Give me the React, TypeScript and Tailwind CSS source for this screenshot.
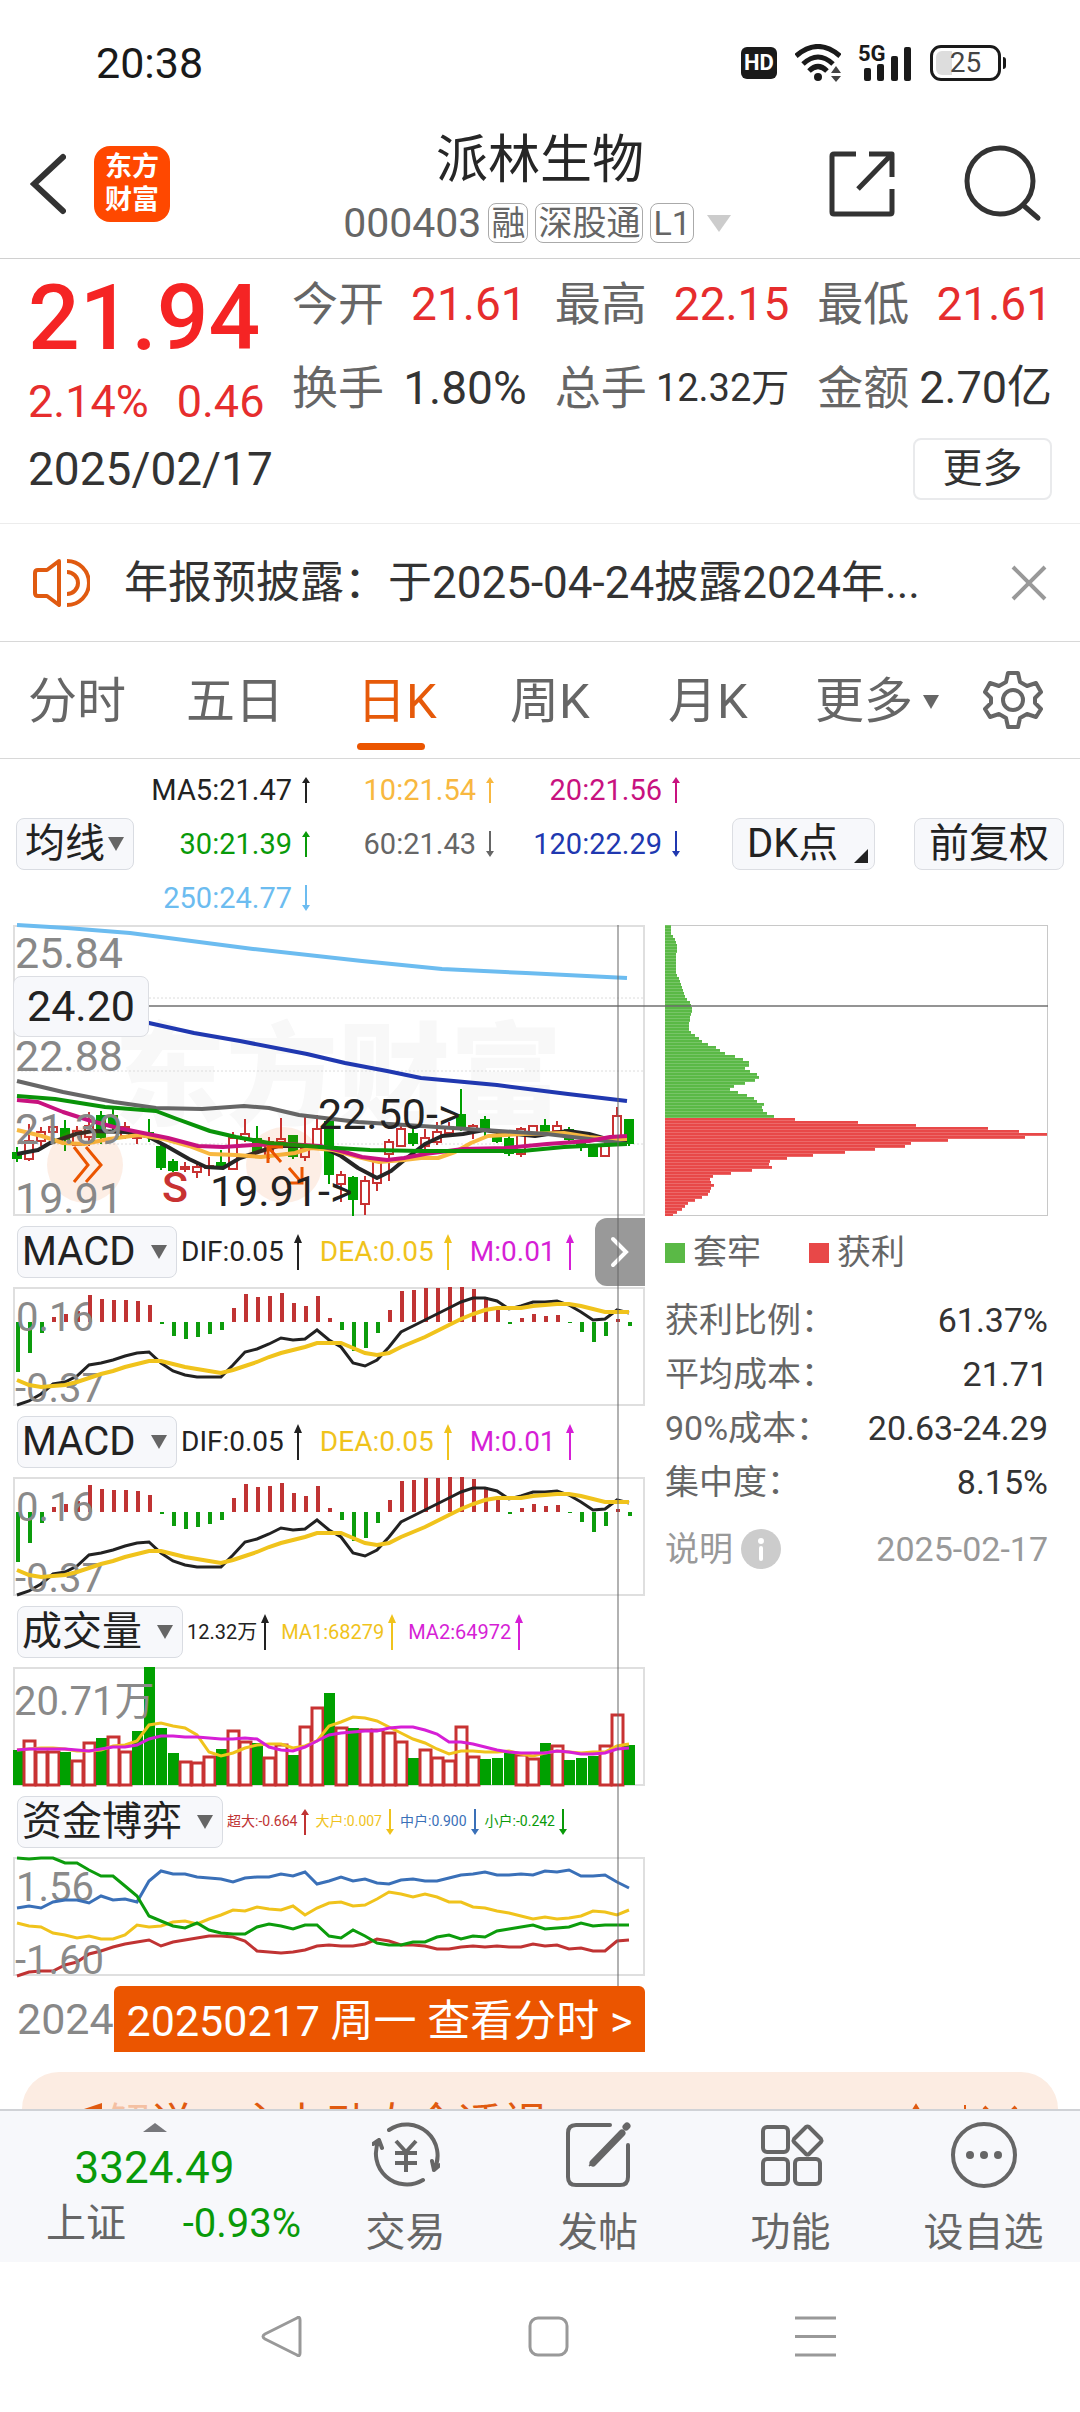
import type { ReactNode } from "react";

// ---- chart data -----------------------------------------------------------

// [up, high, body top, body bottom, low]
const candles = [
  [0, 222, 228, 233, 237], [1, 199, 216, 234, 236], [1, 202, 207, 216, 221], [1, 200, 202, 207, 217],
  [0, 195, 204, 214, 226], [1, 201, 206, 220, 221], [1, 187, 201, 212, 221], [0, 186, 191, 212, 219],
  [0, 184, 191, 201, 207], [1, 197, 202, 211, 214], [1, 206, 211, 213, 219], [0, 194, 208, 212, 217],
  [0, 219, 222, 242, 245], [0, 234, 237, 245, 247], [1, 237, 242, 244, 247], [1, 236, 242, 247, 253],
  [1, 232, 241, 243, 251], [0, 225, 238, 240, 242], [1, 207, 213, 244, 245], [1, 194, 209, 214, 217],
  [0, 201, 214, 226, 229], [1, 212, 217, 231, 234], [1, 193, 214, 217, 222], [0, 210, 211, 231, 234],
  [1, 191, 224, 232, 236], [1, 190, 204, 221, 222], [0, 196, 197, 249, 259], [1, 246, 250, 259, 277],
  [0, 251, 253, 274, 291], [1, 251, 256, 279, 290], [1, 232, 237, 258, 266], [1, 214, 217, 229, 256],
  [1, 201, 204, 221, 222], [0, 201, 209, 218, 221], [1, 204, 213, 221, 225], [1, 197, 207, 217, 220],
  [1, 197, 202, 208, 212], [0, 164, 190, 202, 206], [1, 199, 201, 204, 214], [0, 191, 195, 205, 211],
  [0, 207, 211, 216, 218], [0, 211, 214, 228, 231], [1, 202, 204, 229, 232], [1, 200, 201, 211, 212],
  [0, 194, 201, 206, 208], [1, 196, 201, 206, 208], [0, 202, 205, 214, 216], [0, 214, 216, 221, 226],
  [0, 219, 221, 231, 231], [1, 217, 221, 231, 231], [1, 182, 191, 211, 214], [0, 194, 195, 218, 221],
];

const maLines = [
  { color: "#6cbcf0", d: "M4 0 L54 3 L117 8 L240 24 L349 36 L429 44 L513 48 L614 53" },
  { color: "#2038b0", d: "M60 82 L136 98 L181 108 L227 116 L294 129 L332 138 L374 146 L408 153 L484 160 L555 169 L614 176" },
  { color: "#262626", d: "M4 229 L25 225 L37 218 L63 209 L80 206 L113 207 L134 211 L155 222 L176 234 L193 242 L210 243 L227 233 L248 226 L265 221 L290 221 L311 223 L328 231 L345 243 L364 253 L378 246 L395 232 L412 219 L429 211 L450 209 L471 205 L492 208 L522 211 L555 206 L576 209 L597 215 L614 215" },
  { color: "#f8b840", d: "M4 205 L29 211 L50 218 L71 219 L96 214 L126 210 L151 214 L176 221 L197 229 L223 230 L248 232 L282 228 L298 223 L320 225 L345 232 L366 237 L391 235 L408 233 L425 233 L442 227 L458 218 L475 211 L509 209 L551 208 L576 212 L597 214 L614 214" },
  { color: "#666666", d: "M4 156 L50 167 L101 177 L143 183 L189 184 L231 181 L256 183 L286 190 L345 197 L408 201 L471 205 L534 209 L585 215 L614 219" },
  { color: "#c8127f", d: "M4 175 L25 177 L50 187 L75 195 L101 202 L130 208 L155 213 L185 221 L210 222 L240 220 L273 219 L307 221 L328 226 L349 232 L374 235 L391 233 L412 229 L450 224 L492 223 L534 219 L576 216 L597 212 L614 211" },
  { color: "#099309", d: "M4 171 L42 174 L92 182 L143 186 L164 194 L197 206 L223 212 L256 218 L307 222 L357 225 L408 226 L509 226 L551 222 L614 219" },
];

// end of each bar, measured from the zero line at 35; taller than 35 means below zero
const macdBars = [
  85, 66, 46, 30, 27, 24, 8, 12, 13, 13, 14, 18, 37, 49, 52, 50, 47, 43, 21, 7, 10, 9, 6, 16, 19, 9,
  31, 43, 64, 61, 46, 23, 4, 3, 1, 1, 0, 0, 2, 10, 23, 37, 31, 27, 29, 28, 36, 45, 55, 49, 32, 39,
];
const dif = [
  118, 114, 107, 97, 95, 89, 78, 76, 73, 69, 66, 65, 76, 84, 88, 90, 90, 90, 78, 65, 62, 57, 51, 53, 52, 43,
  53, 60, 76, 79, 73, 60, 45, 39, 33, 27, 21, 15, 11, 11, 14, 22, 19, 15, 15, 14, 18, 25, 33, 32, 23, 26,
];
const dea = [
  93, 98, 100, 99, 98, 95, 91, 87, 84, 80, 77, 74, 74, 77, 80, 82, 84, 86, 83, 79, 75, 70, 66, 63, 60, 56,
  56, 56, 61, 66, 68, 66, 60, 55, 50, 44, 38, 32, 27, 23, 21, 21, 21, 19, 18, 17, 17, 19, 22, 25, 25, 25,
];

const volumeTops = [
  83, 73, 84, 84, 85, 93, 75, 71, 69, 84, 64, 0, 61, 86, 94, 95, 89, 82, 63, 74, 76, 90, 77, 88, 59, 40,
  26, 60, 61, 62, 62, 65, 74, 91, 82, 90, 93, 59, 89, 92, 91, 85, 87, 91, 76, 78, 93, 91, 89, 78, 47, 78,
];
const volumeDown = [0, 4, 7, 10, 11, 12, 13, 17, 20, 23, 26, 28, 33, 39, 40, 41, 44, 46, 47, 48, 51];
const volMa1 = [
  83, 82, 81, 81, 82, 84, 84, 83, 79, 78, 74, 58, 56, 59, 61, 68, 85, 89, 86, 81, 78, 77, 77, 81, 79, 74,
  59, 55, 50, 51, 54, 60, 66, 72, 76, 82, 87, 84, 84, 85, 85, 84, 87, 89, 86, 84, 85, 86, 85, 85, 79, 77,
];
const volMa2 = [
  83, 82, 82, 82, 82, 83, 84, 82, 80, 80, 78, 72, 69, 69, 70, 70, 71, 72, 72, 71, 72, 80, 83, 84, 80, 74,
  68, 66, 65, 64, 64, 61, 60, 60, 63, 67, 75, 75, 77, 80, 83, 85, 86, 86, 86, 84, 85, 87, 87, 86, 82, 81,
];

const fundRed = [
  119, 115, 114, 114, 108, 105, 97, 94, 90, 87, 85, 83, 89, 85, 83, 81, 79, 79, 80, 84, 94, 95, 96, 95, 93, 89,
  88, 89, 89, 87, 82, 84, 88, 88, 89, 92, 92, 90, 89, 90, 89, 90, 90, 87, 89, 88, 92, 91, 94, 94, 84, 83,
];
const fundYellow = [
  66, 69, 70, 76, 78, 81, 79, 82, 82, 78, 68, 70, 69, 65, 64, 67, 62, 58, 53, 54, 50, 52, 53, 49, 58, 51,
  46, 45, 49, 48, 42, 35, 37, 40, 37, 40, 45, 45, 50, 51, 54, 56, 59, 62, 60, 62, 61, 59, 54, 55, 58, 53,
];
const fundBlue = [
  51, 49, 51, 45, 43, 43, 46, 39, 43, 42, 45, 24, 14, 17, 17, 20, 21, 22, 25, 21, 20, 20, 17, 19, 15, 27,
  24, 20, 24, 22, 26, 27, 23, 22, 24, 24, 21, 18, 17, 15, 18, 18, 17, 18, 14, 15, 13, 19, 19, 18, 25, 31,
];
const fundGreen = [
  1, 2, 1, 1, 6, 6, 13, 19, 19, 29, 39, 59, 64, 69, 71, 66, 73, 76, 77, 77, 70, 67, 69, 72, 68, 68,
  79, 81, 73, 79, 86, 88, 88, 85, 85, 80, 78, 82, 79, 80, 74, 72, 70, 68, 72, 71, 70, 66, 69, 68, 68, 68,
];

const chips = [
  6, 6, 6, 6, 8, 10, 11, 12, 12, 12, 11, 11, 11, 11, 11, 11, 11, 12, 14, 15, 16, 17, 18, 19, 20, 22, 25, 26, 27, 27,
  26, 25, 25, 24, 24, 24, 26, 30, 34, 37, 43, 51, 55, 60, 70, 78, 84, 84, 80, 85, 92, 94, 90, 80, 69, 65, 73, 82,
  89, 92, 99, 97, 98, 102, 109, 130, 193, 251, 323, 354, 382, 360, 283, 246, 240, 210, 180, 148, 122, 105, 104, 107,
  87, 66, 48, 45, 46, 49, 46, 45, 43, 37, 30, 23, 20, 17, 12, 8,
];
const FIRST_PROFIT_CHIP = 65;

const barX = (i: number) => 4 + i * 12;
const linePoints = (ys: number[]) => ys.map((y, i) => `${barX(i)},${y}`).join(" ");

// ---- small pieces ---------------------------------------------------------

function Trend({ up, tall = false }: { up: boolean; tall?: boolean }) {
  return (
    <svg viewBox={tall ? "0 0 8 36" : "0 0 8 26"} className={tall ? "h-9 w-2 shrink-0" : "h-[26px] w-2 shrink-0"} fill="currentColor">
      {up ? (
        <path d={tall ? "M4 0 L8 9 H5 V36 H3 V9 H0 Z" : "M4 0 L8 6 H5 V26 H3 V6 H0 Z"} />
      ) : (
        <path d={tall ? "M4 36 L8 27 H5 V0 H3 V27 H0 Z" : "M4 26 L8 20 H5 V0 H3 V20 H0 Z"} />
      )}
    </svg>
  );
}

function Picker({ label, value, compact = false }: { label: string; value: string; compact?: boolean }) {
  return (
    <div className="relative shrink-0">
      <select
        aria-label={label}
        defaultValue={value}
        className={`block h-[52px] appearance-none rounded-lg border border-[#d9dce2] bg-[#f7f8fb] text-[40px] leading-[50px] text-[#222] ${
          compact ? "pl-2 pr-7" : "pl-1 pr-10"
        }`}
      >
        <option>{value}</option>
      </select>
      <svg viewBox="0 0 16 14" className="pointer-events-none absolute top-[19px] right-2.5 h-3.5 w-4" fill="#666">
        <path d="M0 0 H16 L8 14 Z" />
      </svg>
    </div>
  );
}

function Quote({ label, value, tone = "text-[#333]", size = "text-[46px]" }: { label: string; value: string; tone?: string; size?: string }) {
  return (
    <div className="flex h-[84px] items-center justify-between whitespace-nowrap">
      <dt className="text-[46px] text-[#666]">{label}</dt>
      <dd className={`${size} ${tone}`}>{value}</dd>
    </div>
  );
}

type Reading = { text: string; up: boolean; color: string };

function IndicatorHeader({
  name,
  readings,
  className,
  arrowGap = "gap-1",
  tall = true,
}: {
  name: string;
  readings: Reading[];
  className: string;
  arrowGap?: string;
  tall?: boolean;
}) {
  return (
    <div className="flex h-[71px] items-center gap-1 pl-1">
      <Picker label="指标" value={name} />
      <div className={`flex items-center whitespace-nowrap ${className}`}>
        {readings.map((r) => (
          <span key={r.text} className={`flex items-center ${arrowGap} ${r.color}`}>
            <span>{r.text}</span>
            <Trend up={r.up} tall={tall} />
          </span>
        ))}
      </div>
    </div>
  );
}

function SubChart({ children }: { children: ReactNode }) {
  return (
    <svg viewBox="0 0 632 119" className="block h-auto w-full overflow-visible">
      <rect x="1" y="1" width="630" height="117" fill="none" stroke="#dfdfdf" strokeWidth="2" />
      {children}
    </svg>
  );
}

function MacdChart() {
  return (
    <SubChart>
      {macdBars.map((y, i) => (
        <rect key={i} x={barX(i) - 1} y={Math.min(y, 35)} width="4" height={Math.abs(y - 35)} fill={y < 35 ? "#c03333" : "#0c9c0c"} />
      ))}
      <polyline points={linePoints(dif)} fill="none" stroke="#222" strokeWidth="3" />
      <text x="3" y="44" fontSize="40" fill="#8a8a8a">0.16</text>
      <text x="2" y="115" fontSize="40" fill="#8a8a8a">-0.37</text>
      <polyline points={linePoints(dea)} fill="none" stroke="#f0c31c" strokeWidth="4" />
    </SubChart>
  );
}

function PriceChart() {
  return (
    <svg viewBox="0 0 632 291" className="block h-auto w-full overflow-visible">
      <text x="101" y="192" fontSize="112" fontWeight="900" fill="#f8f8f8">东方财富</text>
      <rect x="1" y="1" width="630" height="289" fill="none" stroke="#dfdfdf" strokeWidth="2" />
      {[73, 146, 219].map((y) => (
        <line key={y} x1="0" x2="632" y1={y} y2={y} stroke="#dcdcdc" strokeDasharray="2 2" />
      ))}
      {candles.map(([up, high, top, bottom, low], i) => {
        const x = barX(i);
        const color = up ? "#c83232" : "#00a000";
        return (
          <g key={i} stroke={color} strokeWidth="2" fill={up ? "#fff" : color}>
            <path d={`M${x} ${high} V${top} M${x} ${bottom} V${low}`} />
            <rect x={x - 4} y={top} width="8" height={bottom - top} />
          </g>
        );
      })}
      {maLines.map((line) => (
        <path key={line.color} d={line.d} fill="none" stroke={line.color} strokeWidth="4" strokeLinejoin="round" />
      ))}
      <g fill="#eb5500" fillOpacity="0.1">
        <circle cx="72" cy="240" r="38" />
        <circle cx="271" cy="240" r="38" />
      </g>
      <g fontSize="43" fill="#888">
        <text x="2" y="43">25.84</text>
        <text x="2" y="146">22.88</text>
        <text x="2" y="219">21.39</text>
        <text x="2" y="288">19.91</text>
      </g>
      <g fill="none" stroke="#eb5500" strokeWidth="3">
        <path d="M61 222 L75 240 L61 257 M73 222 L88 240 L73 257" />
        <path d="M268 237 L255 222 M255 238 V222 H270 M276 243 L289 258 M289 242 V258 H274" />
      </g>
      <text x="149" y="277" fontSize="43" fontWeight="500" fill="#c83232">S</text>
      <g fontSize="43" fill="#222">
        <text x="305" y="204">22.50-&gt;</text>
        <text x="197" y="281">19.91-&gt;</text>
      </g>
    </svg>
  );
}

function ChipChart() {
  return (
    <svg viewBox="0 0 383 291" className="block h-auto w-full">
      <rect x="0.5" y="0.5" width="382" height="290" fill="none" stroke="#c8c8c8" />
      {chips.map((w, i) => (
        <g key={i}>
          <rect x="0" y={Math.max(0, i * 3 - 2)} width={w} height="3" fill={i < FIRST_PROFIT_CHIP ? "#5ab946" : "#e84848"} />
          <rect x="0" y={i * 3} width={w} height="1" fill="#fff" fillOpacity="0.18" />
        </g>
      ))}
    </svg>
  );
}

// ---- page sections --------------------------------------------------------

function StatusBar() {
  return (
    <div className="flex h-[126px] items-center justify-between pr-[74px] pl-24 text-[43px] text-[#1a1a1a]">
      <span>20:38</span>
      <div className="flex items-center gap-[18px]">
        <span className="flex h-8 w-9 items-center justify-center rounded-md bg-[#1a1a1a] text-[22px] leading-none font-bold text-white">HD</span>
        <svg viewBox="0 0 46 38" className="h-[38px] w-[46px]" fill="none" stroke="#1a1a1a" strokeWidth="5">
          <path d="M1 12 Q23 -7 45 12 M8 20 Q23 6 38 20 M14 27 Q23 18 32 27" />
          <circle cx="23" cy="33" r="4" fill="#1a1a1a" stroke="none" />
          <path d="M41 22 L46 29 H36 Z M41 38 L36 32 H46 Z" fill="#444" stroke="none" />
        </svg>
        <svg viewBox="0 0 53 38" className="h-[38px] w-[53px] overflow-visible" fill="#1a1a1a">
          <text x="-1" y="17" fontSize="22" fontWeight="700">5G</text>
          <rect x="5" y="24" width="7" height="13" rx="2" />
          <rect x="18" y="20" width="7" height="17" rx="2" />
          <rect x="32" y="12" width="7" height="25" rx="2" />
          <rect x="45" y="3" width="7" height="34" rx="2" />
        </svg>
        <div className="flex items-center gap-0.5">
          <span className="relative flex h-9 w-[71px] items-center justify-center rounded-[11px] border-3 border-[#1a1a1a] text-[28px] leading-none">
            <span className="absolute inset-y-[3px] left-[3px] w-4 rounded-l-md bg-[#ddd]" />
            <span className="relative text-[#444]">25</span>
          </span>
          <span className="h-3 w-[3px] rounded-r bg-[#1a1a1a]" />
        </div>
      </div>
    </div>
  );
}

function Header() {
  return (
    <header className="grid h-[133px] grid-cols-[1fr_auto_1fr] items-center border-b border-[#d0d0d0] px-[30px]">
      <div className="flex items-center gap-7 pb-4">
        <button aria-label="返回">
          <svg viewBox="0 0 36 62" className="h-[62px] w-9" fill="none" stroke="#333" strokeWidth="6" strokeLinecap="round">
            <path d="M33 4 L4 31 L33 58" />
          </svg>
        </button>
        <a href="#home" className="flex size-[76px] flex-col items-center justify-center rounded-2xl bg-[#ff4800] text-[27px] leading-[33px] font-bold text-white">
          <span>东方</span>
          <span>财富</span>
        </a>
      </div>
      <div className="flex flex-col items-center">
        <h1 className="text-[52px] leading-[62px] text-[#262626]">派林生物</h1>
        <div className="flex h-[62px] items-center gap-[7px] pr-1.5 text-[34px] leading-[38px] text-[#666]">
          <span className="text-[41px]">000403</span>
          <span className="rounded-lg border border-[#aaa] px-0.5">融</span>
          <span className="rounded-lg border border-[#aaa] px-0.5">深股通</span>
          <span className="rounded-lg border border-[#aaa] px-0.5">L1</span>
          <svg viewBox="0 0 24 17" className="ml-1.5 h-[17px] w-6" fill="#ccc">
            <path d="M0 0 H24 L12 17 Z" />
          </svg>
        </div>
      </div>
      <div className="flex items-center justify-end gap-[68px] pr-2 pb-4">
        <button aria-label="分享">
          <svg viewBox="0 0 68 68" className="size-[68px]" fill="none" stroke="#333" strokeWidth="5" strokeLinejoin="round">
            <path d="M28 4 H6 Q4 4 4 6 V62 Q4 64 6 64 H62 Q64 64 64 62 V39 M30 39 L63 5 M41 4 H64 V27" />
          </svg>
        </button>
        <button aria-label="搜索">
          <svg viewBox="0 0 78 78" className="size-[78px]" fill="none" stroke="#333" strokeWidth="5" strokeLinecap="round">
            <circle cx="36" cy="36" r="33" />
            <path d="M59 60 L74 73" />
          </svg>
        </button>
      </div>
    </header>
  );
}

function QuotePanel() {
  return (
    <section className="border-b border-[#ececec] pr-7 pb-[22px] pl-7">
      <div className="grid grid-cols-[264fr_760fr]">
        <div className="pt-2.5 whitespace-nowrap">
          <p className="text-[91px] leading-[98px] font-medium text-[#f52424]">21.94</p>
          <p className="flex gap-7 text-[45px] leading-[70px] text-[#e62d2d]">
            <span>2.14%</span>
            <span>0.46</span>
          </p>
        </div>
        <dl className="grid grid-cols-3 content-start gap-x-7 pt-[3px]">
          <Quote label="今开" value="21.61" tone="text-[#e62d2d]" />
          <Quote label="最高" value="22.15" tone="text-[#e62d2d]" />
          <Quote label="最低" value="21.61" tone="text-[#e62d2d]" />
          <Quote label="换手" value="1.80%" />
          <Quote label="总手" value="12.32万" size="text-[38px]" />
          <Quote label="金额" value="2.70亿" size="text-[45px]" />
        </dl>
      </div>
      <div className="flex h-16 items-center justify-between text-[46px] text-[#333]">
        <time>2025/02/17</time>
        <button className="h-[62px] w-[139px] rounded-lg border-2 border-[#e9eaec] text-[40px] leading-none">更多</button>
      </div>
    </section>
  );
}

function Notice() {
  return (
    <section className="flex h-[118px] items-center border-b border-[#d8d8d8] pr-8 pl-8">
      <svg viewBox="0 0 58 50" className="h-[50px] w-[58px] shrink-0" fill="none" stroke="#e05a10" strokeWidth="4" strokeLinejoin="round">
        <path d="M27 3 L15 12 H6 Q3 12 3 15 V35 Q3 38 6 38 H15 L27 47 Z M35 14 A11 11 0 0 1 35 36 M35 3 A22 22 0 0 1 35 47" />
      </svg>
      <p className="ml-[34px] flex-1 truncate text-[44px] text-[#333]">年报预披露：于2025-04-24披露2024年...</p>
      <button aria-label="关闭" className="shrink-0">
        <svg viewBox="0 0 38 38" className="size-[38px]" stroke="#999" strokeWidth="4">
          <path d="M3 3 L35 35 M35 3 L3 35" />
        </svg>
      </button>
    </section>
  );
}

function PeriodTabs() {
  return (
    <nav className="grid h-[117px] grid-cols-[158fr_171fr_153fr_158fr_147fr_168fr_97fr] items-center border-b border-[#d8d8d8] pt-1 pl-7 text-[49px] leading-[112px] whitespace-nowrap text-[#666]">
      <button className="text-left">分时</button>
      <button className="text-left">五日</button>
      <div className="relative">
        <button className="text-left text-[#e65a0a]">日K</button>
        <span className="absolute bottom-2 left-0 h-[7px] w-[68px] rounded bg-[#eb5500]" />
      </div>
      <button className="text-left">周K</button>
      <button className="text-left">月K</button>
      <button className="flex items-center gap-2.5 text-left">
        更多
        <svg viewBox="0 0 16 14" className="h-3.5 w-4" fill="#666">
          <path d="M0 0 H16 L8 14 Z" />
        </svg>
      </button>
      <button aria-label="设置" className="pb-1">
        <svg viewBox="0 0 60 60" className="size-[60px]" fill="none" stroke="#666" strokeWidth="4" strokeLinejoin="round">
          <path d="M25 3 H35 L37 12 L44 16 L53 13 L58 22 L52 28 V33 L58 39 L53 47 L44 44 L37 48 L35 57 H25 L23 48 L16 44 L7 47 L2 39 L8 33 V28 L2 22 L7 13 L16 16 L23 12 Z" />
          <circle cx="30" cy="30" r="10" />
        </svg>
      </button>
    </nav>
  );
}

const averages: Reading[] = [
  { text: "MA5:21.47", up: true, color: "text-[#222]" },
  { text: "10:21.54", up: true, color: "text-[#f8b840]" },
  { text: "20:21.56", up: true, color: "text-[#c8127f]" },
  { text: "30:21.39", up: true, color: "text-[#099a09]" },
  { text: "60:21.43", up: false, color: "text-[#666]" },
  { text: "120:22.29", up: false, color: "text-[#2038b0]" },
  { text: "250:24.77", up: false, color: "text-[#6cbcf0]" },
];

function AverageBar() {
  return (
    <div className="flex h-[166px] items-center justify-between pt-1 pr-4 pl-4">
      <Picker label="均线" value="均线" compact />
      <div className="grid w-[546px] grid-cols-[176fr_184fr_186fr] text-[29px] leading-[54px]">
        {averages.map((a) => (
          <span key={a.text} className={`flex items-center justify-end gap-2.5 ${a.color}`}>
            {a.text}
            <Trend up={a.up} />
          </span>
        ))}
      </div>
      <div className="ml-[52px] flex flex-1 justify-between text-[40px] leading-[50px] text-[#222]">
        <button className="relative h-[52px] w-[143px] rounded-lg border border-[#dcdee3] bg-[#f7f8fb] pl-3.5 text-left">
          DK点
          <svg viewBox="0 0 14 14" className="absolute right-1.5 bottom-1.5 size-3.5" fill="#222">
            <path d="M14 0 V14 H0 Z" />
          </svg>
        </button>
        <button className="h-[52px] w-[150px] rounded-lg border border-[#dcdee3] bg-[#f7f8fb]">前复权</button>
      </div>
    </div>
  );
}

const macdReadings: Reading[] = [
  { text: "DIF:0.05", up: true, color: "text-[#222]" },
  { text: "DEA:0.05", up: true, color: "text-[#f0c31c]" },
  { text: "M:0.01", up: true, color: "text-[#d61fd6]" },
];
const volumeReadings: Reading[] = [
  { text: "12.32万", up: true, color: "text-[#222]" },
  { text: "MA1:68279", up: true, color: "text-[#f0c31c]" },
  { text: "MA2:64972", up: true, color: "text-[#d61fd6]" },
];
const fundReadings: Reading[] = [
  { text: "超大:-0.664", up: true, color: "text-[#c03333]" },
  { text: "大户:0.007", up: false, color: "text-[#f0c31c]" },
  { text: "中户:0.900", up: false, color: "text-[#3a70b8]" },
  { text: "小户:-0.242", up: false, color: "text-[#099a09]" },
];

function Charts() {
  return (
    <div className="relative">
      <PriceChart />
      <div className="relative">
        <IndicatorHeader name="MACD" readings={macdReadings} className="gap-[18px] text-[28px]" arrowGap="gap-2.5" />
        <button aria-label="展开" className="absolute top-0.5 right-0 flex h-[68px] w-[50px] items-center justify-center rounded-l-xl bg-[#999]">
          <svg viewBox="0 0 20 32" className="h-8 w-5" fill="none" stroke="#fff" strokeWidth="4" strokeLinecap="round">
            <path d="M3 3 L16 16 L3 29" />
          </svg>
        </button>
      </div>
      <MacdChart />
      <IndicatorHeader name="MACD" readings={macdReadings} className="gap-[18px] text-[28px]" arrowGap="gap-2.5" />
      <MacdChart />
      <IndicatorHeader name="成交量" readings={volumeReadings} className="gap-3 text-[20px]" />
      <SubChart>
        {volumeTops.map((y, i) =>
          volumeDown.includes(i) ? (
            <rect key={i} x={Math.max(0, barX(i) - 5)} y={y} width="11" height={118 - y} fill="#00a000" />
          ) : (
            <rect key={i} x={barX(i) - 5} y={y + 1} width="11" height={117 - y} fill="#fff" stroke="#c83232" strokeWidth="3" />
          )
        )}
        <text x="1" y="48" fontSize="40" fill="#8a8a8a">20.71万</text>
        <polyline points={linePoints(volMa1)} fill="none" stroke="#f0c31c" strokeWidth="3" />
        <polyline points={linePoints(volMa2)} fill="none" stroke="#d61fd6" strokeWidth="3" />
      </SubChart>
      <IndicatorHeader name="资金博弈" readings={fundReadings} className="gap-1.5 text-[14px]" tall={false} />
      <SubChart>
        <text x="3" y="44" fontSize="40" fill="#8a8a8a">1.56</text>
        <polyline points={linePoints(fundRed)} fill="none" stroke="#c03333" strokeWidth="3" />
        <text x="2" y="117" fontSize="40" fill="#8a8a8a">-1.60</text>
        <polyline points={linePoints(fundYellow)} fill="none" stroke="#f0c31c" strokeWidth="3" />
        <polyline points={linePoints(fundBlue)} fill="none" stroke="#3a70b8" strokeWidth="3" />
        <polyline points={linePoints(fundGreen)} fill="none" stroke="#0c9c0c" strokeWidth="3" />
      </SubChart>
      <div className="mt-2.5 flex h-[66px] items-center">
        <span className="w-[101px] pl-1 text-[43px] text-[#888]">2024</span>
        <button className="h-full flex-1 rounded-t-md bg-[#eb5500] pt-1 text-[43px] leading-none whitespace-nowrap text-white">
          20250217 周一 查看分时 &gt;
        </button>
      </div>
      <span className="absolute top-0 bottom-[66px] left-[95.5%] w-0.5 bg-[#666]/50" />
    </div>
  );
}

const chipStats = [
  ["获利比例：", "61.37%"],
  ["平均成本：", "21.71"],
  ["90%成本：", "20.63-24.29"],
  ["集中度：", "8.15%"],
];

function ChipPanel() {
  return (
    <aside className="text-[34px] whitespace-nowrap">
      <ChipChart />
      <div className="flex h-[71px] items-center gap-12 pt-0.5 text-[#666]">
        <span className="flex items-center gap-2"><i className="size-5 bg-[#5ab946]" />套牢</span>
        <span className="flex items-center gap-2"><i className="size-5 bg-[#e84848]" />获利</span>
      </div>
      <dl className="mt-1.5">
        {chipStats.map(([label, value]) => (
          <div key={label} className="flex h-[54px] items-center justify-between">
            <dt className="text-[#666]">{label}</dt>
            <dd className="text-[#333]">{value}</dd>
          </div>
        ))}
      </dl>
      <div className="flex h-20 items-center justify-between text-[#999]">
        <button className="flex items-center gap-2">
          说明
          <svg viewBox="0 0 40 40" className="size-10">
            <circle cx="20" cy="20" r="20" fill="#ccc" />
            <circle cx="20" cy="12" r="3" fill="#fff" />
            <rect x="18" y="17" width="4" height="15" rx="2" fill="#fff" />
          </svg>
        </button>
        <time>2025-02-17</time>
      </div>
    </aside>
  );
}

function PromoBanner() {
  return (
    <div className="mx-[22px] mt-5 h-[37px] overflow-hidden rounded-t-[46px] bg-[#fcece2]">
      <div className="flex items-start pt-[29px] pr-10 pl-10 text-[44px] leading-[48px] text-[#e05a10]">
        <svg viewBox="0 0 40 44" className="h-11 w-10" fill="#e05a10">
          <path d="M4 14 L40 2 V42 L4 30 Z" />
        </svg>
        <p className="ml-1 flex-1 whitespace-nowrap">
          <span className="opacity-30">解</span>说：主力动态全透视
        </p>
        <svg viewBox="0 0 24 40" className="mt-0.5 mr-9 h-10 w-6" fill="none" stroke="#e05a10" strokeWidth="4">
          <path d="M2 20 L12 4 L22 20" />
        </svg>
        <span className="mt-1 h-10 w-0.5 bg-[#e05a10]" />
        <svg viewBox="0 0 36 36" className="mt-1 ml-4 size-9" stroke="#e05a10" strokeWidth="4">
          <path d="M2 2 L34 34 M34 2 L2 34" />
        </svg>
      </div>
    </div>
  );
}

function Tool({ label, children }: { label: string; children: ReactNode }) {
  return (
    <button className="flex flex-col items-center pt-2.5 text-[40px] text-[#666]">
      <svg viewBox="0 0 68 68" className="size-[68px]" fill="none" stroke="#666" strokeWidth="4" strokeLinecap="round" strokeLinejoin="round">
        {children}
      </svg>
      <span className="mt-3 leading-[64px]">{label}</span>
    </button>
  );
}

function BottomBar() {
  return (
    <nav className="grid h-[153px] grid-cols-[309fr_193fr_192fr_193fr_193fr] border-t-2 border-[#d0d2d6] bg-[#f7f8fb]">
      <button className="flex flex-col items-center pt-3 text-[#099a09]">
        <svg viewBox="0 0 24 9" className="h-[9px] w-6" fill="#77787c">
          <path d="M12 0 L24 9 H0 Z" />
        </svg>
        <span className="mt-1.5 text-[44px] leading-[60px]">3324.49</span>
        <span className="flex w-full items-center justify-between pr-2 pl-[46px] text-[40px] leading-[52px]">
          <span className="text-[#666]">上证</span>
          <span>-0.93%</span>
        </span>
      </button>
      <Tool label="交易">
        <path d="M17 9 A31 31 0 0 1 62 49 M62 49 L68 44 M62 49 L60 40" />
        <path d="M51 59 A31 31 0 0 1 7 19 M7 19 L1 23 M7 19 L10 27" />
        <path d="M24 20 L34 31 L44 20 M34 31 V51 M23 32 H45 M23 42 H45" strokeLinecap="butt" />
      </Tool>
      <Tool label="发帖">
        <path d="M46 4 H12 Q4 4 4 12 V56 Q4 64 12 64 H56 Q64 64 64 56 V24" />
        <path d="M58 12 L29 42 M63 5 L62 6" strokeWidth="7" />
        <path d="M28 40 L25 45 L31 43 Z" fill="#666" strokeWidth="1" />
      </Tool>
      <Tool label="功能">
        <rect x="6" y="6" width="25" height="25" rx="4" />
        <rect x="6" y="38" width="25" height="25" rx="4" />
        <rect x="38" y="38" width="25" height="25" rx="4" />
        <path d="M49 6 Q50.500 5 52 6 L64 18 Q65 19.500 64 21 L52 33 Q50.500 34 49 33 L37 21 Q36 19.500 37 18 Z" />
      </Tool>
      <Tool label="设自选">
        <circle cx="34" cy="34" r="31" />
        <g fill="#666" stroke="none">
          <circle cx="20" cy="34" r="4" />
          <circle cx="34" cy="34" r="4" />
          <circle cx="48" cy="34" r="4" />
        </g>
      </Tool>
    </nav>
  );
}

function SystemNav() {
  return (
    <div className="flex h-[149px] items-center justify-center gap-[226px] pl-4">
      <button aria-label="后退">
        <svg viewBox="0 0 41 41" className="size-[41px]" fill="none" stroke="#999" strokeWidth="3" strokeLinejoin="round">
          <path d="M36 2 Q39 0 39 4 V37 Q39 41 36 39 L4 23 Q0 20.500 4 18 Z" />
        </svg>
      </button>
      <button aria-label="主屏幕">
        <svg viewBox="0 0 41 41" className="size-[41px]" fill="none" stroke="#999" strokeWidth="3">
          <rect x="2" y="2" width="37" height="37" rx="8" />
        </svg>
      </button>
      <button aria-label="最近任务">
        <svg viewBox="0 0 41 41" className="size-[41px]" stroke="#999" strokeWidth="3">
          <path d="M0 2 H41 M0 20.500 H41 M0 39 H41" />
        </svg>
      </button>
    </div>
  );
}

export default function App() {
  return (
    <div className="flex min-h-screen flex-col overflow-x-hidden bg-white font-['Roboto','Noto_Sans_CJK_SC',sans-serif]">
      <StatusBar />
      <Header />
      <QuotePanel />
      <Notice />
      <PeriodTabs />
      <AverageBar />
      <main className="relative mr-8 ml-[13px] grid grid-cols-[632fr_383fr] gap-5">
        <Charts />
        <ChipPanel />
        <span className="absolute top-20 right-0 left-0 h-0.5 bg-[#666]/70" />
        <span className="absolute top-[51px] left-0 flex h-[61px] w-[136px] items-center justify-center rounded-lg border border-[#dcdee3] bg-[#f7f8fb] text-[43px] text-[#222]">
          24.20
        </span>
      </main>
      <PromoBanner />
      <BottomBar />
      <SystemNav />
    </div>
  );
}
